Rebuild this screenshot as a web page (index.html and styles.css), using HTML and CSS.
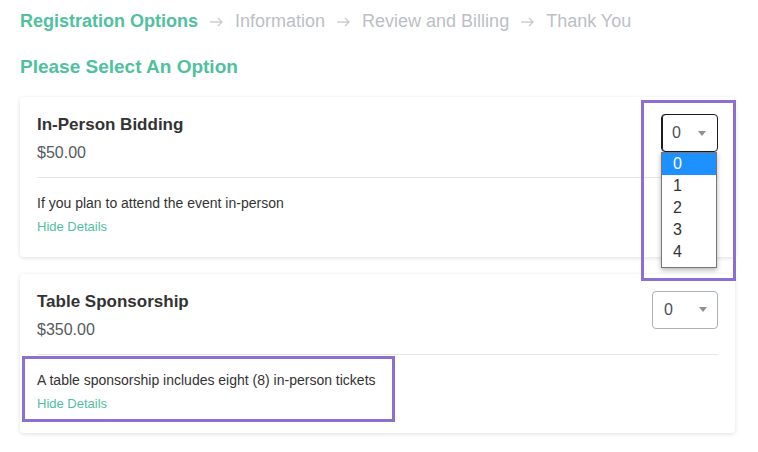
FILE: index.html
```html
<!DOCTYPE html>
<html lang="en">
<head>
    <meta charset="UTF-8">
    <meta name="viewport" content="width=device-width, initial-scale=1.0">
    <title>Registration Options</title>
    <link rel="stylesheet" href="styles.css">
</head>
<body>
    <div class="page">
        <!-- Etapas do cadastro -->
        <div class="steps">
            <span class="step active">Registration Options</span>
            <svg class="arrow" width="13" height="10" viewBox="0 0 13 10"><path d="M0 5h12M8 1l4 4-4 4"/></svg>
            <span class="step">Information</span>
            <svg class="arrow" width="13" height="10" viewBox="0 0 13 10"><path d="M0 5h12M8 1l4 4-4 4"/></svg>
            <span class="step">Review and Billing</span>
            <svg class="arrow" width="13" height="10" viewBox="0 0 13 10"><path d="M0 5h12M8 1l4 4-4 4"/></svg>
            <span class="step">Thank You</span>
        </div>

        <h2 class="heading">Please Select An Option</h2>

        <div class="card">
            <div class="card-head">
                <div>
                    <div class="name">In-Person Bidding</div>
                    <div class="price">$50.00</div>
                </div>
                <div class="qty-wrap">
                    <div class="qty open">
                        <span>0</span>
                        <svg class="caret" width="8" height="5" viewBox="0 0 8 5"><path d="M0 0h8L4 5z"/></svg>
                    </div>
                    <div class="qty-list">
                        <div class="qty-item selected">0</div>
                        <div class="qty-item">1</div>
                        <div class="qty-item">2</div>
                        <div class="qty-item">3</div>
                        <div class="qty-item">4</div>
                    </div>
                    <div class="mark mark-qty"></div>
                </div>
            </div>
            <hr class="divider">
            <div class="details">
                <p class="desc">If you plan to attend the event in-person</p>
                <a class="toggle" href="#">Hide Details</a>
            </div>
        </div>

        <div class="card">
            <div class="card-head">
                <div>
                    <div class="name">Table Sponsorship</div>
                    <div class="price">$350.00</div>
                </div>
                <div class="qty-wrap">
                    <div class="qty wide">
                        <span>0</span>
                        <svg class="caret" width="8" height="5" viewBox="0 0 8 5"><path d="M0 0h8L4 5z"/></svg>
                    </div>
                </div>
            </div>
            <hr class="divider">
            <div class="details">
                <p class="desc">A table sponsorship includes eight (8) in-person tickets</p>
                <a class="toggle" href="#">Hide Details</a>
                <div class="mark mark-details"></div>
            </div>
        </div>
    </div>
</body>
</html>
```

FILE: styles.css
```css
body {
    margin: 0;
    background-color: #ffffff;
    font-family: 'Liberation Sans', Arial, sans-serif;
    color: #333333;
}

.page {
    padding: 11px 23px 0 20px;
}

.steps {
    display: flex;
    align-items: center;
    font-size: 18px;
    line-height: 1.2;
    color: #bcc0c5;
}

.step.active {
    color: #50c19e;
    font-weight: bold;
}

.arrow {
    margin: 0 12px;
    fill: none;
    stroke: #cbcfd3;
    stroke-width: 1.5;
}

.heading {
    margin: 23px 0 19px;
    font-size: 19px;
    line-height: 1.2;
    color: #50c19e;
}

.card {
    position: relative;
    background-color: white;
    border-radius: 4px;
    box-shadow: 0 1px 4px rgba(0, 0, 0, 0.13);
    padding: 17px 17px 20px;
    margin-bottom: 17px;
}

.card-head {
    display: flex;
    justify-content: space-between;
    align-items: flex-start;
}

.name {
    margin-top: 1px;
    font-size: 17px;
    line-height: 20px;
    font-weight: bold;
    color: #333333;
}

.price {
    margin-top: 6px;
    font-size: 16px;
    line-height: 24px;
    color: #555a5f;
}

.divider {
    margin: 12px 0 0;
    border: none;
    border-top: 1px solid #e6e6e6;
}

.details {
    position: relative;
    padding-top: 15px;
}

.desc {
    margin: 0;
    font-size: 14px;
    line-height: 21px;
    color: #333333;
}

.toggle {
    display: block;
    margin-top: 3px;
    font-size: 13px;
    line-height: 19.5px;
    color: #50c19e;
    text-decoration: none;
}

/* seletor de quantidade */
.qty-wrap {
    position: relative;
}

.qty {
    box-sizing: border-box;
    display: flex;
    align-items: center;
    justify-content: space-between;
    width: 66px;
    height: 38px;
    padding: 0 10px 0 11px;
    border: 1px solid #aab1b7;
    border-radius: 4px;
    font-size: 16px;
    color: #495057;
}

.qty.open {
    width: 57px;
    padding: 0 11px 0 10px;
    border-color: #1c1c1c;
    box-shadow: inset 1px 0 0 #1c1c1c;
}

.caret {
    fill: #8a9299;
}

.qty-list {
    position: absolute;
    top: 38px;
    left: 0;
    width: 56px;
    box-sizing: border-box;
    padding-bottom: 4px;
    background-color: white;
    border: 1px solid #767676;
    box-shadow: 0 2px 5px rgba(0, 0, 0, 0.3);
    z-index: 2;
}

.qty-item {
    height: 22px;
    line-height: 22px;
    padding-left: 11px;
    font-size: 16px;
    color: #333333;
}

.qty-item.selected {
    background-color: #1e90ff;
    color: white;
}

/* marcações em roxo */
.mark {
    position: absolute;
    box-sizing: border-box;
    border: 3px solid #8c6fd1;
    z-index: 3;
}

.mark-qty {
    top: -14px;
    left: -20px;
    width: 95px;
    height: 181px;
}

.mark-details {
    top: 1px;
    left: -15px;
    width: 373px;
    height: 66px;
}
```
